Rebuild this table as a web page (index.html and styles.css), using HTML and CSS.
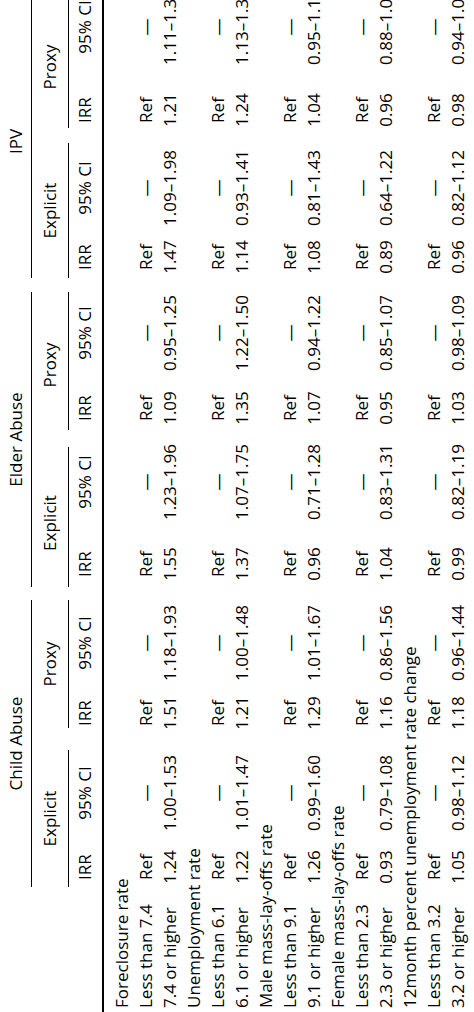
FILE: index.html
```html
<!DOCTYPE html>
<html lang="en">
<head>
<meta charset="utf-8">
<title>Rotated table</title>
<link rel="stylesheet" href="styles.css">
</head>
<body>
<div class="page">
  <div class="frame">
    <div class="grid">
      <div class="blank"></div>
      <div class="group g-child">Child Abuse</div>
      <div class="group g-elder">Elder Abuse</div>
      <div class="group g-ipv">IPV</div>

      <div class="blank"></div>
      <div class="sub s-ce">Explicit</div>
      <div class="sub s-cp">Proxy</div>
      <div class="sub s-ee">Explicit</div>
      <div class="sub s-ep">Proxy</div>
      <div class="sub s-ie">Explicit</div>
      <div class="sub s-ip">Proxy</div>

      <div class="blank"></div>
      <div class="colh">IRR</div><div class="colh">95% CI</div>
      <div class="colh">IRR</div><div class="colh">95% CI</div>
      <div class="colh">IRR</div><div class="colh">95% CI</div>
      <div class="colh">IRR</div><div class="colh">95% CI</div>
      <div class="colh">IRR</div><div class="colh">95% CI</div>
      <div class="colh">IRR</div><div class="colh">95% CI</div>

      <div class="rule"></div>

      <div class="cat">Foreclosure rate</div>
      <div class="lab">Less than 7.4</div>
      <div class="v">Ref</div><div class="v">—</div><div class="v">Ref</div><div class="v">—</div>
      <div class="v">Ref</div><div class="v">—</div><div class="v">Ref</div><div class="v">—</div>
      <div class="v">Ref</div><div class="v">—</div><div class="v">Ref</div><div class="v">—</div>
      <div class="lab">7.4 or higher</div>
      <div class="v">1.24</div><div class="v">1.00–1.53</div><div class="v">1.51</div><div class="v">1.18–1.93</div>
      <div class="v">1.55</div><div class="v">1.23–1.96</div><div class="v">1.09</div><div class="v">0.95–1.25</div>
      <div class="v">1.47</div><div class="v">1.09–1.98</div><div class="v">1.21</div><div class="v">1.11–1.33</div>

      <div class="cat">Unemployment rate</div>
      <div class="lab">Less than 6.1</div>
      <div class="v">Ref</div><div class="v">—</div><div class="v">Ref</div><div class="v">—</div>
      <div class="v">Ref</div><div class="v">—</div><div class="v">Ref</div><div class="v">—</div>
      <div class="v">Ref</div><div class="v">—</div><div class="v">Ref</div><div class="v">—</div>
      <div class="lab">6.1 or higher</div>
      <div class="v">1.22</div><div class="v">1.01–1.47</div><div class="v">1.21</div><div class="v">1.00–1.48</div>
      <div class="v">1.37</div><div class="v">1.07–1.75</div><div class="v">1.35</div><div class="v">1.22–1.50</div>
      <div class="v">1.14</div><div class="v">0.93–1.41</div><div class="v">1.24</div><div class="v">1.13–1.36</div>

      <div class="cat">Male mass-lay-offs rate</div>
      <div class="lab">Less than 9.1</div>
      <div class="v">Ref</div><div class="v">—</div><div class="v">Ref</div><div class="v">—</div>
      <div class="v">Ref</div><div class="v">—</div><div class="v">Ref</div><div class="v">—</div>
      <div class="v">Ref</div><div class="v">—</div><div class="v">Ref</div><div class="v">—</div>
      <div class="lab">9.1 or higher</div>
      <div class="v">1.26</div><div class="v">0.99–1.60</div><div class="v">1.29</div><div class="v">1.01–1.67</div>
      <div class="v">0.96</div><div class="v">0.71–1.28</div><div class="v">1.07</div><div class="v">0.94–1.22</div>
      <div class="v">1.08</div><div class="v">0.81–1.43</div><div class="v">1.04</div><div class="v">0.95–1.14</div>

      <div class="cat">Female mass-lay-offs rate</div>
      <div class="lab">Less than 2.3</div>
      <div class="v">Ref</div><div class="v">—</div><div class="v">Ref</div><div class="v">—</div>
      <div class="v">Ref</div><div class="v">—</div><div class="v">Ref</div><div class="v">—</div>
      <div class="v">Ref</div><div class="v">—</div><div class="v">Ref</div><div class="v">—</div>
      <div class="lab">2.3 or higher</div>
      <div class="v">0.93</div><div class="v">0.79–1.08</div><div class="v">1.16</div><div class="v">0.86–1.56</div>
      <div class="v">1.04</div><div class="v">0.83–1.31</div><div class="v">0.95</div><div class="v">0.85–1.07</div>
      <div class="v">0.89</div><div class="v">0.64–1.22</div><div class="v">0.96</div><div class="v">0.88–1.05</div>

      <div class="cat">12month percent unemployment rate change</div>
      <div class="lab">Less than 3.2</div>
      <div class="v">Ref</div><div class="v">—</div><div class="v">Ref</div><div class="v">—</div>
      <div class="v">Ref</div><div class="v">—</div><div class="v">Ref</div><div class="v">—</div>
      <div class="v">Ref</div><div class="v">—</div><div class="v">Ref</div><div class="v">—</div>
      <div class="lab">3.2 or higher</div>
      <div class="v">1.05</div><div class="v">0.98–1.12</div><div class="v">1.18</div><div class="v">0.96–1.44</div>
      <div class="v">0.99</div><div class="v">0.82–1.19</div><div class="v">1.03</div><div class="v">0.98–1.09</div>
      <div class="v">0.96</div><div class="v">0.82–1.12</div><div class="v">0.98</div><div class="v">0.94–1.02</div>
    </div>
  </div>
</div>
</body>
</html>
```

FILE: styles.css
```css
html, body {
  margin: 0;
  padding: 0;
  overflow: hidden;
  background: #ffffff;
}

.page {
  width: 474px;
  height: 1012px;
  overflow: hidden;
}

.frame {
  width: 1031px;
  height: 474px;
  transform-origin: 0 0;
  transform: translateY(1012px) rotate(-90deg);
  font-family: "Open Sans", "Lato", sans-serif;
  font-size: 17px;
  color: #000000;
}

.grid {
  display: grid;
  grid-template-columns: 125px 40px 108px 52px 88px 70px 94px 54px 96px 56px 82px 74px 92px;
  align-items: start;
}

.blank {
  grid-column: 1;
}

.group {
  grid-column: span 4;
  text-align: center;
  line-height: 24px;
  padding: 4px 0 3px;
  border-bottom: 1px solid #000000;
  white-space: nowrap;
}

.g-child { margin: 0 1px 0 0; }
.g-elder { margin: 0 7px 0 12px; }
.g-ipv { margin: 0 0 0 7px; padding-right: 24px; }

.sub {
  grid-column: span 2;
  text-align: center;
  line-height: 24px;
  padding: 6px 0 6px;
  border-bottom: 1px solid #000000;
  white-space: nowrap;
}

.s-ce { margin: 0 11px 0 0; }
.s-cp { margin: 0 1px 0 11px; }
.s-ee { margin: 0 12px 0 12px; padding-right: 12px; }
.s-ep { margin: 0 7px 0 5px; padding-right: 8px; }
.s-ie { margin: 0 -4px 0 7px; }
.s-ip { margin: 0 0 0 19px; padding-right: 25px; }

.colh {
  text-align: center;
  line-height: 24px;
  padding: 4px 0 5px;
  white-space: nowrap;
}

.rule {
  grid-column: 1 / -1;
  height: 2px;
  background: #000000;
  margin-bottom: 6px;
}

.cat {
  grid-column: 1 / -1;
  line-height: 24px;
  padding-left: 4px;
  white-space: nowrap;
}

.lab {
  grid-column: 1;
  line-height: 24px;
  padding-left: 4px;
  white-space: nowrap;
}

.v {
  line-height: 24px;
  text-align: center;
  white-space: nowrap;
}
```
